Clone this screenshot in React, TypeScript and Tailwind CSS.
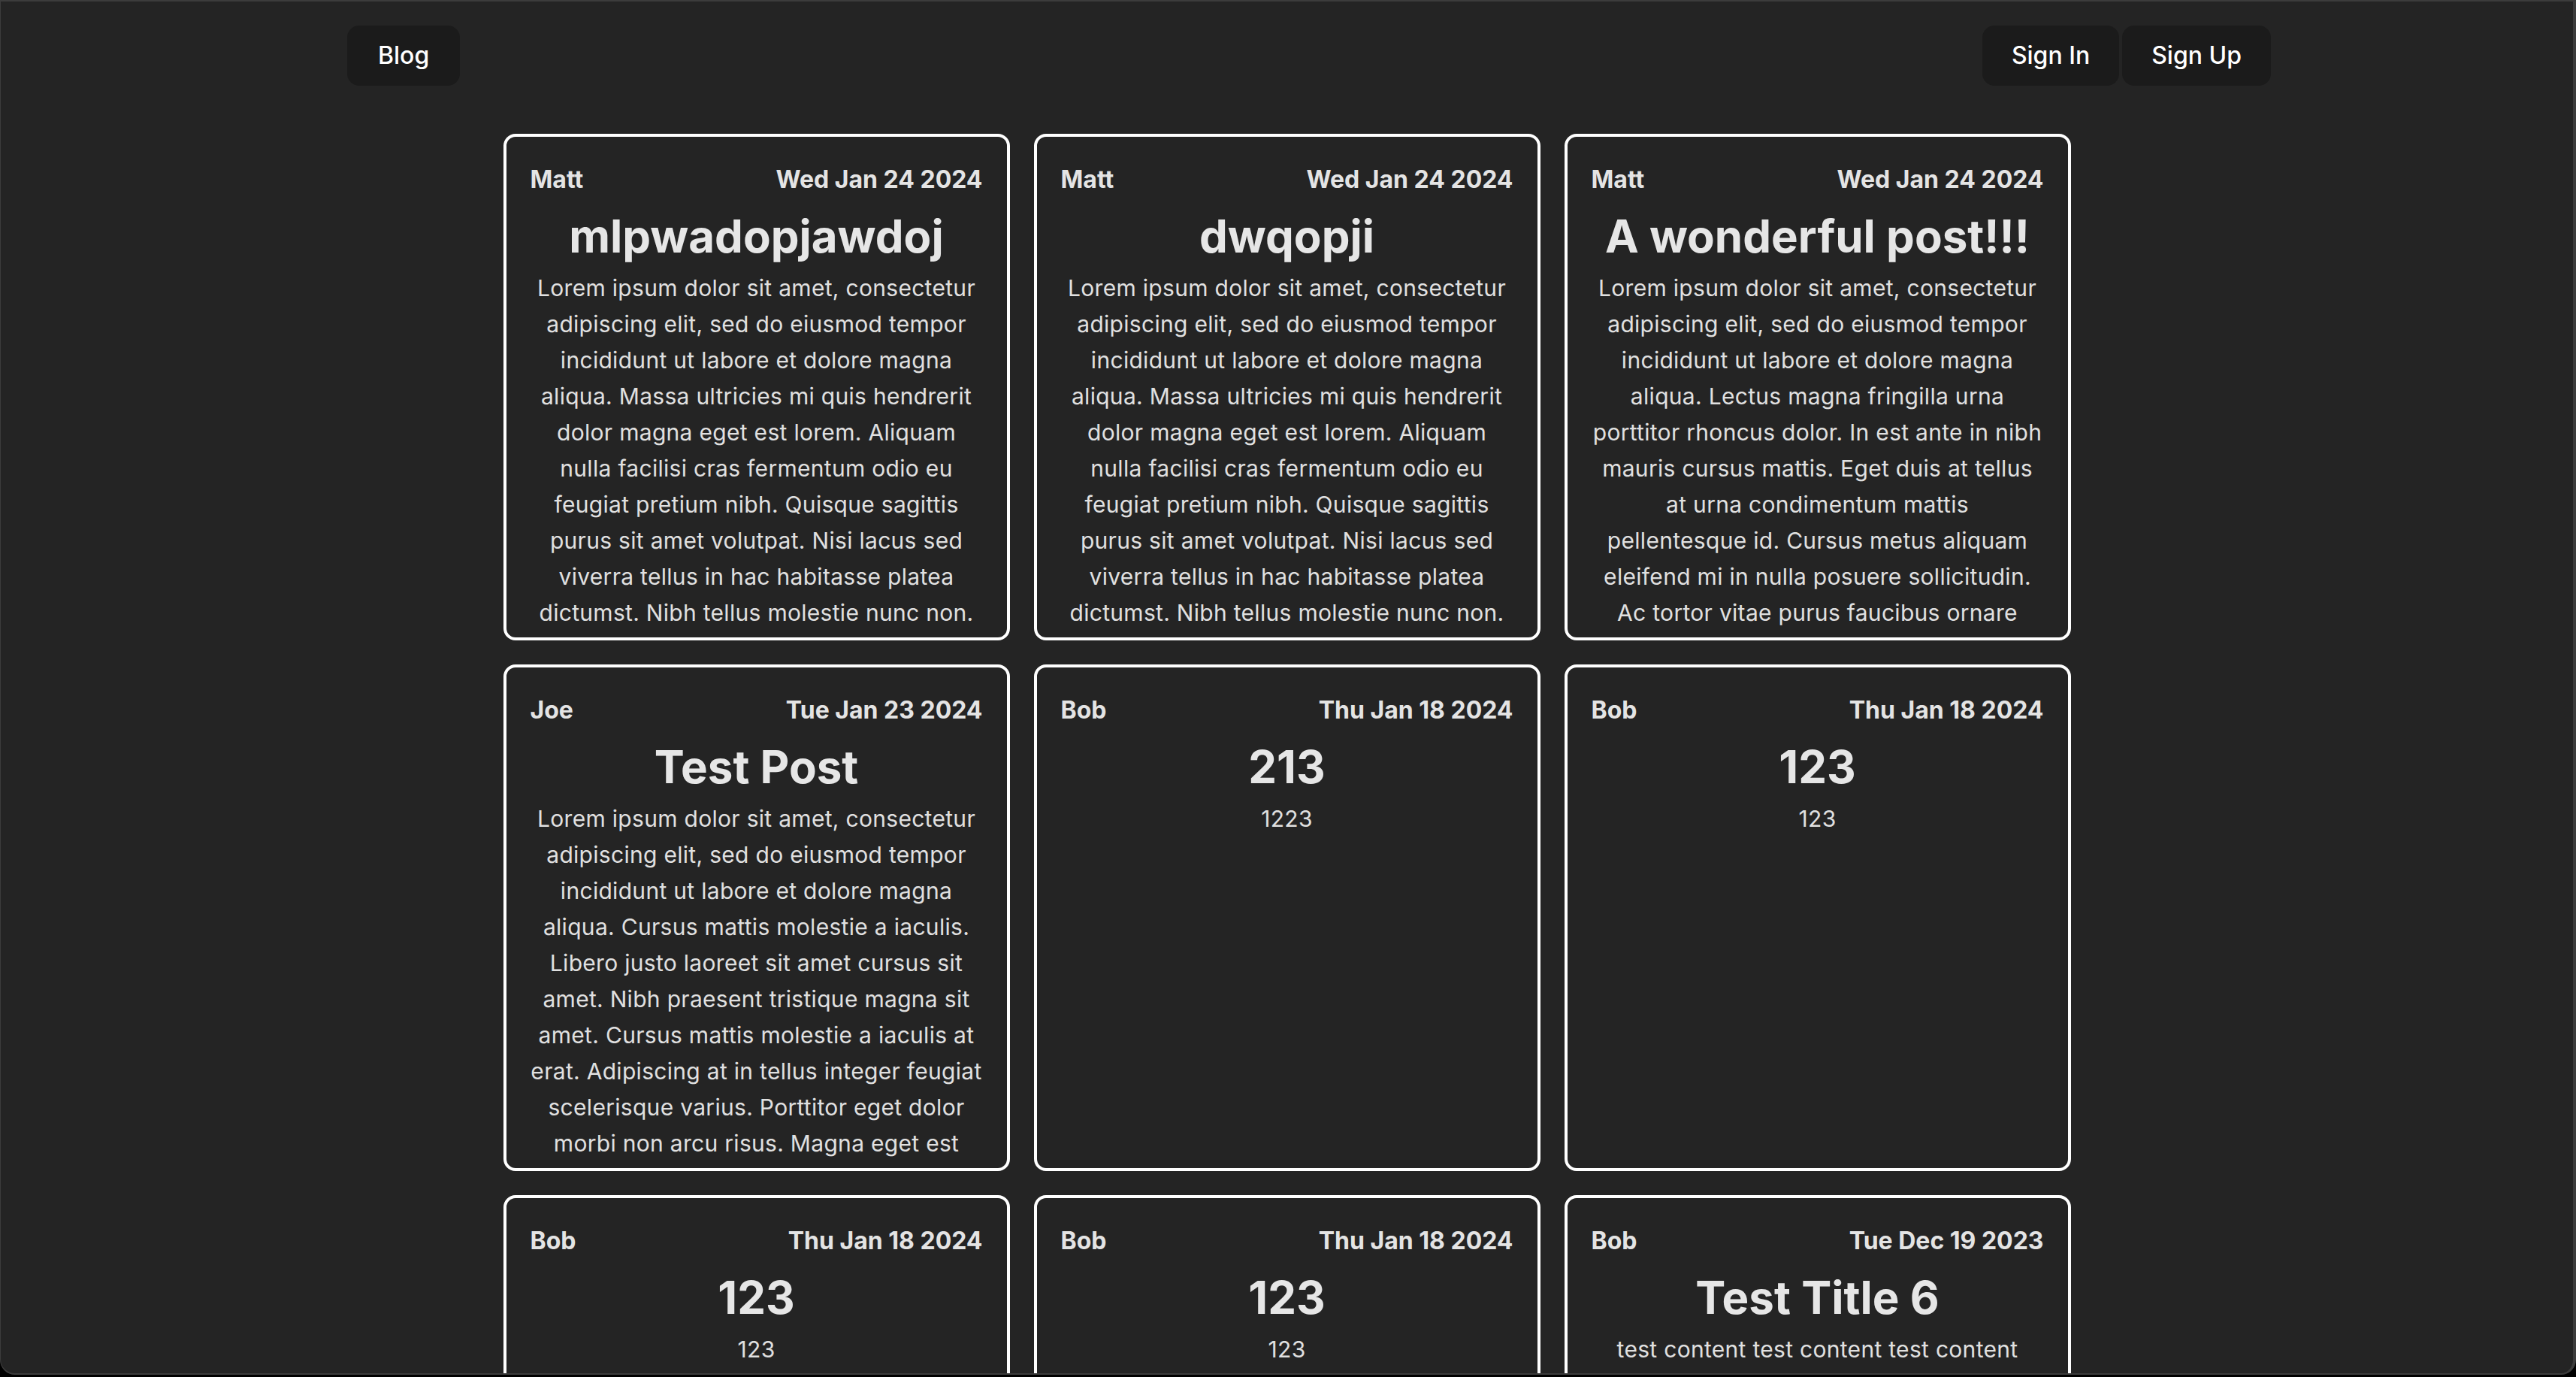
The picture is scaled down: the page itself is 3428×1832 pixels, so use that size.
import React from 'react';

interface Post {
  author: string;
  date: string;
  title: string;
  content: string;
}

const loremA =
  'Lorem ipsum dolor sit amet, consectetur adipiscing elit, sed do eiusmod tempor incididunt ut labore et dolore magna aliqua. Massa ultricies mi quis hendrerit dolor magna eget est lorem. Aliquam nulla facilisi cras fermentum odio eu feugiat pretium nibh. Quisque sagittis purus sit amet volutpat. Nisi lacus sed viverra tellus in hac habitasse platea dictumst. Nibh tellus molestie nunc non. Blandit massa enim nec dui nunc mattis enim ut tellus.';

const loremB =
  'Lorem ipsum dolor sit amet, consectetur adipiscing elit, sed do eiusmod tempor incididunt ut labore et dolore magna aliqua. Lectus magna fringilla urna porttitor rhoncus dolor. In est ante in nibh mauris cursus mattis. Eget duis at tellus at urna condimentum mattis\npellentesque id. Cursus metus aliquam eleifend mi in nulla posuere sollicitudin. Ac tortor vitae purus faucibus ornare suspendisse sed nisi lacus.';

const loremC =
  'Lorem ipsum dolor sit amet, consectetur adipiscing elit, sed do eiusmod tempor incididunt ut labore et dolore magna aliqua. Cursus mattis molestie a iaculis. Libero justo laoreet sit amet cursus sit amet. Nibh praesent tristique magna sit amet. Cursus mattis molestie a iaculis at erat. Adipiscing at in tellus integer feugiat scelerisque varius. Porttitor eget dolor morbi non arcu risus. Magna eget est lorem ipsum dolor sit amet consectetur.';

const posts: Post[] = [
  { author: 'Matt', date: 'Wed Jan 24 2024', title: 'mlpwadopjawdoj', content: loremA },
  { author: 'Matt', date: 'Wed Jan 24 2024', title: 'dwqopji', content: loremA },
  { author: 'Matt', date: 'Wed Jan 24 2024', title: 'A wonderful post!!!', content: loremB },
  { author: 'Joe', date: 'Tue Jan 23 2024', title: 'Test Post', content: loremC },
  { author: 'Bob', date: 'Thu Jan 18 2024', title: '213', content: '1223' },
  { author: 'Bob', date: 'Thu Jan 18 2024', title: '123', content: '123' },
  { author: 'Bob', date: 'Thu Jan 18 2024', title: '123', content: '123' },
  { author: 'Bob', date: 'Thu Jan 18 2024', title: '123', content: '123' },
  {
    author: 'Bob',
    date: 'Tue Dec 19 2023',
    title: 'Test Title 6',
    content: 'test content test content test content\ntest content test content test content',
  },
];

const PostCard: React.FC<{ post: Post }> = ({ post }) => (
  <div className="w-[674px] h-[674px] flex-shrink-0 border-4 border-white rounded-[16px] overflow-hidden px-[32px] pt-[33px] text-center">
    <div className="flex justify-between text-[32px] leading-[48px] font-bold text-[#e4e4e4]">
      <span>{post.author}</span>
      <span>{post.date}</span>
    </div>
    <h2 className="mt-[15px] text-[60px] leading-[72px] font-bold text-[#e6e6e6] whitespace-nowrap">{post.title}</h2>
    <p className="mt-[9px] text-[30px] leading-[48px] tracking-[0.3px] whitespace-pre-line text-[#e0e0e0]">{post.content}</p>
  </div>
);

export default function App() {
  return (
    <div className="w-[3428px] h-[1832px] bg-black overflow-hidden" style={{ fontFamily: 'Inter, "Noto Sans", sans-serif' }}>
      <div className="h-[1829px] bg-[#242424] border-t-2 border-l border-r-4 border-b-2 border-[#3c3c3c] rounded-b-[20px] overflow-hidden">
        <nav className="flex items-center justify-between pl-[461px] pr-[402px] pt-[32px]">
          <button className="h-[80px] px-[41px] rounded-[16px] bg-[#1b1b1b] text-white text-[32px] font-medium">Blog</button>
          <div className="flex gap-[4px]">
            <button className="h-[80px] px-[39px] rounded-[16px] bg-[#1b1b1b] text-white text-[32px] font-medium">Sign In</button>
            <button className="h-[80px] px-[39px] rounded-[16px] bg-[#1b1b1b] text-white text-[32px] font-medium">Sign Up</button>
          </div>
        </nav>
        <main className="mt-[64px] flex justify-center">
          <div className="grid grid-cols-[674px_674px_674px] gap-[32px]">
            {posts.map((p, i) => (
              <PostCard key={i} post={p} />
            ))}
          </div>
        </main>
      </div>
    </div>
  );
}
